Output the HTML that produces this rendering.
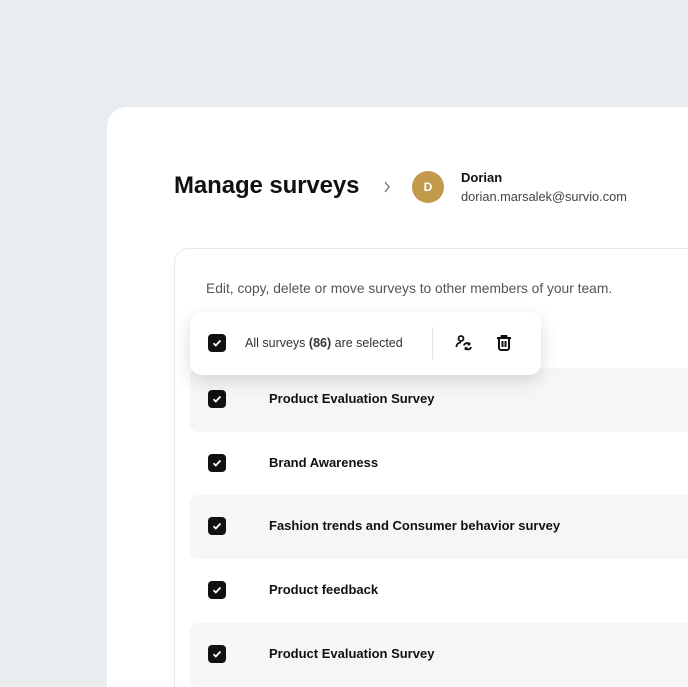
<!DOCTYPE html>
<html><head><style>
*{margin:0;padding:0;box-sizing:border-box}
html,body{width:688px;height:687px;overflow:hidden}
body{background:#e9edf0;font-family:"Liberation Sans",sans-serif;position:relative}
.card{position:absolute;left:107px;top:107px;width:581px;height:580px;background:#fff;border-radius:20px 0 0 0}
.abs{position:absolute}
.inner{position:absolute;left:174px;top:248px;width:514px;height:439px;border:1px solid #e6e8ea;border-right:none;border-bottom:none;border-radius:14px 0 0 0;background:#fff}
.row{position:absolute;left:190px;width:498px;height:64px;border-radius:8px 0 0 8px}
.row.g{background:#f6f6f6}
.cb{position:absolute;left:18px;top:22px;width:18px;height:18px;background:#111;border-radius:4px}
.cb svg{position:absolute;left:3px;top:3px}
.row span{position:absolute;left:79px;top:23px;font-size:13px;font-weight:bold;color:#111}
.bar{position:absolute;left:190px;top:312px;width:351px;height:63px;background:#fff;border-radius:12px;box-shadow:0 6px 18px rgba(0,0,0,.14)}
</style></head><body>
<div class="card"></div>
<div class="abs" style="left:174px;top:172px;font-size:24px;font-weight:bold;color:#111;letter-spacing:-0.1px">Manage surveys</div>
<svg class="abs" style="left:383px;top:181px" width="8" height="12"><path d="M2 1l4 5-4 5" stroke="#777" stroke-width="1.4" fill="none"/></svg>
<div class="abs" style="left:412px;top:171px;width:32px;height:32px;border-radius:50%;background:#c29a4c;color:#fff;font-size:12px;font-weight:bold;text-align:center;line-height:32px">D</div>
<div class="abs" style="left:461px;top:170px;font-size:13px;font-weight:bold;color:#111">Dorian</div>
<div class="abs" style="left:461px;top:189px;font-size:12.8px;color:#444">dorian.marsalek@survio.com</div>
<div class="inner"></div>
<div class="abs" style="left:206px;top:281px;font-size:13.8px;color:#555">Edit, copy, delete or move surveys to other members of your team.</div>

<div class="row g" style="top:368px"><div class="cb"><svg width="12" height="12"><path d="M2.5 6.2l2.3 2.3 4.7-5" stroke="#fff" stroke-width="1.8" fill="none"/></svg></div><span>Product Evaluation Survey</span></div>
<div class="row" style="top:432px"><div class="cb"><svg width="12" height="12"><path d="M2.5 6.2l2.3 2.3 4.7-5" stroke="#fff" stroke-width="1.8" fill="none"/></svg></div><span>Brand Awareness</span></div>
<div class="row g" style="top:495px"><div class="cb"><svg width="12" height="12"><path d="M2.5 6.2l2.3 2.3 4.7-5" stroke="#fff" stroke-width="1.8" fill="none"/></svg></div><span>Fashion trends and Consumer behavior survey</span></div>
<div class="row" style="top:559px"><div class="cb"><svg width="12" height="12"><path d="M2.5 6.2l2.3 2.3 4.7-5" stroke="#fff" stroke-width="1.8" fill="none"/></svg></div><span>Product feedback</span></div>
<div class="row g" style="top:623px"><div class="cb"><svg width="12" height="12"><path d="M2.5 6.2l2.3 2.3 4.7-5" stroke="#fff" stroke-width="1.8" fill="none"/></svg></div><span>Product Evaluation Survey</span></div>

<div class="bar">
<div class="cb" style="top:22px"><svg width="12" height="12"><path d="M2.5 6.2l2.3 2.3 4.7-5" stroke="#fff" stroke-width="1.8" fill="none"/></svg></div>
<div class="abs" style="left:55px;top:24px;font-size:12.5px;color:#333">All surveys <b>(86)</b> are selected</div>
<div class="abs" style="left:242px;top:15px;width:1px;height:32px;background:#e4e4e4"></div>
<svg class="abs" style="left:265px;top:22px" width="18" height="18" viewBox="0 0 18 18" fill="none" stroke="#111" stroke-width="1.8"><circle cx="6" cy="4.5" r="2.5"/><path d="M1.5 13c0-3 2-4.5 4.5-4.5"/><path d="M9 11.5a3 3 0 0 1 5.5-1M16 13a3 3 0 0 1-5.5 1"/><path d="M14.5 8.5v2h-2M10.5 16v-2h2"/></svg>
<svg class="abs" style="left:305px;top:22px" width="18" height="18" viewBox="0 0 18 18" fill="none" stroke="#111" stroke-width="2" stroke-linejoin="round"><path d="M2 4h14M6.5 4V2h5v2M4 4v10a2 2 0 0 0 2 2h6a2 2 0 0 0 2-2V4M7.5 7v6M10.5 7v6"/></svg>
</div>
</body></html>
